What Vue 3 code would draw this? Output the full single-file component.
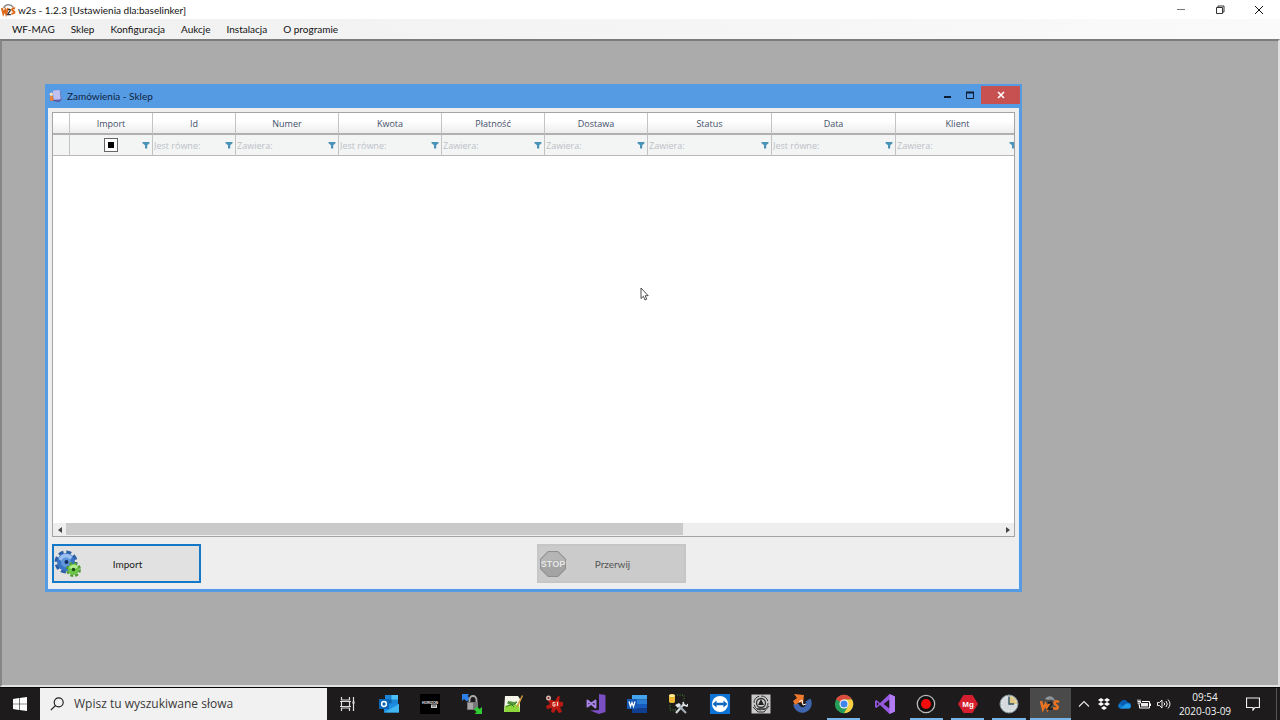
<script setup>
import { ref } from 'vue'

const menu = ['WF-MAG', 'Sklep', 'Konfiguracja', 'Aukcje', 'Instalacja', 'O programie']

const columns = [
  { name: 'Import', size: 'c-check', kind: 'check' },
  { name: 'Id', size: 'c-check', hint: 'Jest równe:' },
  { name: 'Numer', size: 'c-mid', hint: 'Zawiera:' },
  { name: 'Kwota', size: 'c-mid', hint: 'Jest równe:' },
  { name: 'Płatność', size: 'c-mid', hint: 'Zawiera:' },
  { name: 'Dostawa', size: 'c-mid', hint: 'Zawiera:' },
  { name: 'Status', size: 'c-wide', hint: 'Zawiera:' },
  { name: 'Data', size: 'c-wide', hint: 'Jest równe:' },
  { name: 'Klient', size: 'c-wide', hint: 'Zawiera:' }
]

const query = ref('')
</script>

<template>
  <div class="screen">
    <header class="titlebar">
      <svg class="app-icon" viewBox="0 0 16 14" aria-hidden="true">
        <path d="M3 5C4 1 10 0 13 4" fill="none" stroke="#8b8b8b" stroke-width="1.600" />
        <path d="M1 5l1.500 6 2-4 1 4 2-6" fill="none" stroke="#e06a1b" stroke-width="2.200" />
        <path d="M7.500 6.500c3-1 3 1 1 3l-1.500 2.500h3.500" fill="none" stroke="#333" stroke-width="1.400" />
        <path d="M15 5.500c-3-1-4 1.500-2 2.500s2 3-2 3" fill="none" stroke="#e06a1b" stroke-width="2.200" />
      </svg>
      <h1>w2s - 1.2.3 [Ustawienia dla:baselinker]</h1>
      <div class="win-controls">
        <button type="button" aria-label="Minimalizuj">
          <svg viewBox="0 0 10 10"><path d="M1 4.500h8" stroke="#777" /></svg>
        </button>
        <button type="button" aria-label="Przywróć">
          <svg viewBox="0 0 10 10" fill="none" stroke="#333"><path d="M1.500 2.500h6v6h-6zM3 2.500V1h6v6H7.500" /></svg>
        </button>
        <button type="button" aria-label="Zamknij">
          <svg viewBox="0 0 10 10"><path d="M1 1l8 8M9 1l-8 8" stroke="#111" /></svg>
        </button>
      </div>
    </header>

    <nav class="menubar">
      <button v-for="m in menu" :key="m" type="button">{{ m }}</button>
    </nav>

    <main class="workspace">
      <section class="child" aria-label="Zamówienia - Sklep">
        <header class="child-title">
          <svg class="child-icon" viewBox="0 0 14 14" aria-hidden="true">
            <path d="M4 1l8-.5 1.500 10L11 13l-7-1z" fill="#6f6cb8" />
            <path d="M4 1l7.500-.5 1 10-7.500.5z" fill="#bfc2f0" />
            <path d="M3 11.500l8 1.500 2.500-2.500" fill="none" stroke="#4d4690" />
            <circle cx="2.500" cy="5" r="1.800" fill="#ffe2b4" />
            <path d="M1 7h3l1 5H1z" fill="#e98236" />
          </svg>
          <h2>Zamówienia - Sklep</h2>
          <div class="child-controls">
            <button type="button" aria-label="Minimalizuj okno">
              <svg viewBox="0 0 10 10"><path d="M2 7h7" stroke="#0d1c30" stroke-width="2" /></svg>
            </button>
            <button type="button" aria-label="Maksymalizuj okno">
              <svg viewBox="0 0 10 10"><path d="M1.500 2v6.500h7V2" fill="none" stroke="#0d1c30" /><path d="M1 2.500h8" stroke="#0d1c30" stroke-width="2" /></svg>
            </button>
            <button type="button" class="child-close" aria-label="Zamknij okno">
              <svg viewBox="0 0 10 10"><path d="M2 2l6 6M8 2L2 8" stroke="#fff" stroke-width="1.600" /></svg>
            </button>
          </div>
        </header>

        <div class="child-body">
          <div class="grid">
            <div class="grid-view">
              <table>
                <colgroup>
                  <col class="c-mark" />
                  <col v-for="c in columns" :key="c.name" :class="c.size" />
                </colgroup>
                <thead>
                  <tr class="heads">
                    <th></th>
                    <th v-for="c in columns" :key="c.name" scope="col">{{ c.name }}</th>
                  </tr>
                  <tr class="filters">
                    <td></td>
                    <td v-for="c in columns" :key="c.name">
                      <div class="filter">
                        <input v-if="c.kind" type="checkbox" :aria-label="c.name" />
                        <input v-else type="text" :placeholder="c.hint" :aria-label="c.name" />
                        <button type="button" :aria-label="'Filtr ' + c.name">
                          <svg viewBox="0 0 8 8"><path d="M.5 1h7v1.200L5.200 4.200V7.500H3V4.200L.5 2.200z" fill="#4a93b8" /></svg>
                        </button>
                      </div>
                    </td>
                  </tr>
                </thead>
              </table>
            </div>
            <div class="scroll">
              <button type="button" aria-label="Przewiń w lewo">
                <svg viewBox="0 0 6 8"><path d="M5 1v6L1 4z" fill="#444" /></svg>
              </button>
              <div class="track"><div class="thumb"></div></div>
              <button type="button" aria-label="Przewiń w prawo">
                <svg viewBox="0 0 6 8"><path d="M1 1v6l4-3z" fill="#444" /></svg>
              </button>
            </div>
          </div>

          <div class="actions">
            <button type="button" class="action primary">
              <svg viewBox="0 0 28 28" aria-hidden="true">
                <circle cx="12" cy="12" r="9.500" fill="none" stroke="#2f5fa5" stroke-width="4" stroke-dasharray="4.800 2.660" />
                <circle cx="12" cy="12" r="9" fill="#3a74c4" />
                <path d="M4.500 9a8 8 0 0 1 14-2l-3.500 4a4 4 0 0 0-6 1z" fill="#9cc0f2" />
                <circle cx="12" cy="12.500" r="5" fill="#5f95dc" />
                <circle cx="12.500" cy="12" r="2" fill="#152e64" />
                <circle cx="19.500" cy="19.500" r="6" fill="none" stroke="#4f9a35" stroke-width="3" stroke-dasharray="2.900 1.810" />
                <circle cx="19.500" cy="19.500" r="5.500" fill="#6cc546" />
                <path d="M15 18a5 5 0 0 1 9-1l-3 2h-3z" fill="#b3ec8c" />
                <circle cx="19.500" cy="19.500" r="1.800" fill="#1e4d18" />
              </svg>
              <span>Import</span>
            </button>
            <button type="button" class="action" disabled>
              <svg viewBox="0 0 28 28" aria-hidden="true">
                <path d="M9 1h10l8 8v10l-8 8H9l-8-8V9z" fill="#8f8f8f" />
                <path d="M9.500 2h9L26 9.500v9L18.500 26h-9L2 18.500v-9z" fill="#a4a4a4" />
                <path d="M9.500 2h9L26 9.500v3C18 9 10 10 2 14V9.500z" fill="#b5b5b5" />
                <text x="14" y="17" text-anchor="middle" font-family="Liberation Sans, sans-serif" font-size="9" font-weight="700" fill="#e6e6e6">STOP</text>
              </svg>
              <span>Przerwij</span>
            </button>
          </div>
        </div>
      </section>

      <svg class="pointer" viewBox="0 0 9 14" aria-hidden="true">
        <path d="M1 1v10.500l2.400-2.200 1.600 3.700 1.700-.8L5.200 8.700h3z" fill="#fff" stroke="#222" stroke-width=".8" />
      </svg>
    </main>

    <footer class="taskbar">
      <button type="button" class="start" aria-label="Start">
        <svg viewBox="0 0 14 14"><path d="M0 2l6-.9v5.600H0zM6.600 1L14 0v6.700H6.600zM0 7.300h6v5.600L0 12zM6.600 7.300H14V14l-7.400-1z" fill="#fff" /></svg>
      </button>
      <label class="search">
        <svg viewBox="0 0 14 14"><circle cx="8.700" cy="5.300" r="4.500" fill="none" stroke="#222" stroke-width="1.200" /><path d="M5.500 8.500L.8 13.200" stroke="#222" stroke-width="1.200" /></svg>
        <input v-model="query" type="text" placeholder="Wpisz tu wyszukiwane słowa" aria-label="Wyszukaj" />
      </label>

      <div class="tasks">
        <button type="button" aria-label="Widok zadań">
          <svg viewBox="0 0 20 20" fill="none" stroke="#ddd" stroke-width="1.200"><path d="M3.500 3v3h8V3M3.500 17v-3h8v3M3.500 7.500h8v5h-8zM2 7.500h11M2 12.500h11M15.500 3v14" /><path d="M14.500 8.500h2" stroke-width="2.500" /></svg>
        </button>
        <button type="button" aria-label="Outlook">
          <svg viewBox="0 0 20 20">
            <path d="M6 1h13v9H6z" fill="#1b86d8" /><path d="M12.500 1H19v4.500h-6.500z" fill="#4cc1f5" /><path d="M6 5.500h6.500V10H6z" fill="#0f5ea8" />
            <path d="M5 9l15 1v8.500H5z" fill="#1a8de0" /><path d="M5 18.500L20 10v8.500z" fill="#41b5f2" /><path d="M0 5h10v10H0z" fill="#0a66b8" />
            <circle cx="5" cy="10" r="2.400" fill="none" stroke="#fff" stroke-width="1.500" />
          </svg>
        </button>
        <button type="button" aria-label="Horizon">
          <svg viewBox="0 0 20 20">
            <path d="M0 0h20v20H0z" fill="#000" />
            <text x="2" y="9.500" font-family="Liberation Sans, sans-serif" font-size="3.500" font-weight="700" fill="#eee">HORIZON</text>
            <path d="M11 10.500h6v3.500h-6z" fill="#c9c9c9" /><path d="M12 12h4" stroke="#555" />
          </svg>
        </button>
        <button type="button" aria-label="WinSCP">
          <svg viewBox="0 0 20 20">
            <path d="M0 0h7L5.500 2 8 4.500 5 7.500 2 5 0 7z" fill="#2e7fe8" />
            <path d="M7.500 9V6a3.500 4 0 0 1 7 0v3" fill="none" stroke="#aaa" stroke-width="1.800" />
            <path d="M5 8h11v8H5z" fill="#777" /><path d="M6 9h5v6H6z" fill="#a8a8a8" />
            <path d="M20 20h-7.500l2-2-2.500-2.500 3-3 2.500 2.500 2.500-2z" fill="#31c934" />
          </svg>
        </button>
        <button type="button" aria-label="Notepad++">
          <svg viewBox="0 0 20 20">
            <path d="M2 2h13l2 3v13H1z" fill="#f3f6e8" /><path d="M2 12c4-2 9-2 14-1l1 7H1z" fill="#8ed63c" />
            <path d="M4 9c3-4 6 1 10-2-1 5-5 5-9 3" fill="#5a9a45" /><path d="M3 13c4-3 8-1 11-5M5 7l6 6" stroke="#3b7f29" fill="none" />
            <path d="M19 1l-5 10-1 3 2.500-2L20 2z" fill="#d79d41" />
          </svg>
        </button>
        <button type="button" aria-label="IrfanView">
          <svg viewBox="0 0 20 20">
            <path d="M3 5l5 1 3 1 3-5 2 .5-1 5 4 .5v4l-3 1 2 5-3 1-3-4-2 4-3-1 1-4-5 1-1-3 4-2z" fill="#b91912" />
            <circle cx="4.500" cy="4" r="2.500" fill="#d8bcb8" /><circle cx="4.500" cy="4" r="1" fill="#801812" />
            <path d="M8 8l7-1v5l-6 1z" fill="#d93429" /><path d="M11 8.500H9V12h2v-2M13.500 8v4" stroke="#eed2c4" fill="none" />
          </svg>
        </button>
        <button type="button" aria-label="Visual Studio">
          <svg viewBox="0 0 20 20">
            <path d="M13 0l6.500 1v17L13 20l-9-3.500 9-.5z" fill="#7b4fc4" />
            <path d="M1.500 6.500v6l8-6v7z" fill="none" stroke="#a883e6" stroke-width="1.900" stroke-linejoin="round" />
          </svg>
        </button>
        <button type="button" aria-label="Word">
          <svg viewBox="0 0 20 20">
            <path d="M5 1h15v4.500H5z" fill="#42a5ee" /><path d="M5 5.500h15V10H5z" fill="#2b7cd3" /><path d="M5 10h15v4.500H5z" fill="#185abd" /><path d="M5 14.500h15V19H5z" fill="#103f91" />
            <path d="M0 5h10v10H0z" fill="#1658b5" /><path d="M2 7.500l1.500 5L5 8.500l1.500 4 1.500-5" fill="none" stroke="#fff" stroke-width="1.300" />
          </svg>
        </button>
        <button type="button" aria-label="SQL Server Management Studio">
          <svg viewBox="0 0 20 20">
            <path d="M1 1.500c0-2 6-2 6 0v6c0 2-6 2-6 0z" fill="#eeb934" /><ellipse cx="4" cy="1.800" rx="3" ry="1.300" fill="#fff0a2" />
            <path d="M9 1h7v6M2 11v5h6" fill="none" stroke="#458f37" stroke-dasharray="1 1.500" />
            <path d="M8 19l8-9" stroke="#d3d7db" stroke-width="2.200" /><path d="M10 11l8 8" stroke="#a7afb9" stroke-width="2.200" />
            <path d="M7 11l4-2 2 2-3 3z" fill="#dfe5ea" /><path d="M15 8l1 3 3 1 1-2" fill="none" stroke="#dfe5ea" stroke-width="1.600" />
          </svg>
        </button>
        <button type="button" aria-label="TeamViewer">
          <svg viewBox="0 0 20 20"><path d="M0 0h20v20H0z" fill="#0e74d4" /><circle cx="10" cy="10" r="8" fill="#fff" /><path d="M2.500 10l4-3.500v2.300h7V6.500l4 3.500-4 3.500v-2.300h-7v2.300z" fill="#0e68bd" /></svg>
        </button>
        <button type="button" aria-label="Narzędzie">
          <svg viewBox="0 0 20 20">
            <path d="M.5.500h19v19H.5z" fill="#c9c9c9" /><g fill="none" stroke="#333"><circle cx="10" cy="9" r="7" stroke-dasharray="9 2" /><circle cx="10" cy="9" r="4.500" stroke-width="1.300" /><path d="M2 13l5 5M18 12l-5 6M7 18h6" /></g>
            <path d="M10 5l3 6H7z" fill="#222" /><path d="M6 15h8" stroke="#333" stroke-width="1.500" />
          </svg>
        </button>
        <button type="button" aria-label="Baselinker">
          <svg viewBox="0 0 20 20">
            <path d="M16 6a6.500 6.500 0 1 1-12 4" fill="none" stroke="#3e65ad" stroke-width="5.500" />
            <path d="M2 0l10 1-1 9-3-2-5 3-2-4 4-3z" fill="#ee782b" /><path d="M7 8l3-2 1 5 3-1" fill="none" stroke="#fff" />
          </svg>
        </button>
        <button type="button" class="running" aria-label="Chrome">
          <svg viewBox="0 0 20 20">
            <circle cx="10" cy="10" r="9.200" fill="#269d58" /><path d="M10 10L2 5.400A9.200 9.200 0 0 1 18 5.400H10z" fill="#dd4b3e" />
            <path d="M10 5.400h8A9.200 9.200 0 0 1 10 19.200l4-6.900z" fill="#f8cf45" />
            <circle cx="10" cy="10" r="4.500" fill="#fff" /><circle cx="10" cy="10" r="3.500" fill="#4285e9" />
          </svg>
        </button>
        <button type="button" aria-label="Visual Studio 2019">
          <svg viewBox="0 0 20 20">
            <path d="M14.500 0L20 2.500v15L14.500 20 5 11l-3.500 3L0 13V7l1.500-1L5 9zM14.500 5.500L8.500 10l6 4.500zM1.800 8v4L4 10z" fill="#9559df" fill-rule="evenodd" />
            <path d="M14.500 0L20 2.500v15L14.500 20z" fill="#b17bf2" />
          </svg>
        </button>
        <button type="button" class="running" aria-label="Nagrywanie">
          <svg viewBox="0 0 20 20"><circle cx="10" cy="10" r="8.700" fill="#111" stroke="#bbb" stroke-width="1.300" /><circle cx="10" cy="10" r="5" fill="#f20c0c" /></svg>
        </button>
        <button type="button" class="running" aria-label="Mg">
          <svg viewBox="0 0 20 20"><path d="M5.500 1h9L20 10l-5.500 9h-9L0 10z" fill="#d61f2e" /><text x="10" y="13" text-anchor="middle" font-family="Liberation Sans, sans-serif" font-size="8" font-weight="700" fill="#fff">Mg</text></svg>
        </button>
        <button type="button" class="running" aria-label="Zegar">
          <svg viewBox="0 0 20 20"><circle cx="10" cy="10" r="9" fill="#d3d9dc" stroke="#85949c" /><path d="M10 10V2a8 8 0 0 1 8 8z" fill="#ddc783" /><circle cx="10" cy="10" r="7" fill="none" stroke="#fff" stroke-dasharray="1 2.660" /><path d="M10 2.500V10h5" fill="none" stroke="#315264" stroke-width="1.400" /></svg>
        </button>
        <button type="button" class="running current" aria-label="w2s">
          <svg viewBox="0 0 20 20">
            <path d="M5 5c3-4 8-4 11 3-3-3-6-3-8-2z" fill="#8f9699" />
            <path d="M1 7l2 8 2.500-5 2 5 1.500-5M19 8c-4-2-6 1-3 3s2 5-3 3" fill="none" stroke="#e87422" stroke-width="2.500" />
            <path d="M8 9c4-2 5 1 2 3l-2 3h5" fill="none" stroke="#1b1b1b" stroke-width="1.500" />
          </svg>
        </button>
      </div>

      <div class="tray">
        <button type="button" aria-label="Pokaż ukryte ikony"><svg viewBox="0 0 14 14"><path d="M2 9.500l5-5 5 5" fill="none" stroke="#e4e4e4" stroke-width="1.200" /></svg></button>
        <button type="button" aria-label="Dropbox"><svg viewBox="0 0 14 14"><path d="M4 1l3 2-3 2-3-2zM10 1l3 2-3 2-3-2zM4 5l3 2-3 2-3-2zM10 5l3 2-3 2-3-2zM7 9l3 2-3 2-3-2z" fill="#fff" /></svg></button>
        <button type="button" aria-label="OneDrive"><svg viewBox="0 0 14 14"><path d="M3 11.500a3 3 0 0 1 0-5.500A4 4 0 0 1 10.500 5.500a3 3 0 0 1 1 6z" fill="#0d78d0" /><path d="M3 6a4 4 0 0 1 7.500-.5L5 9z" fill="#0a5dae" /><path d="M3 11.500l6-4.500c3-1 5 1 4.500 3 0 1-1 1.500-2 1.500z" fill="#239beb" /></svg></button>
        <button type="button" aria-label="Bateria"><svg viewBox="0 0 14 14"><path d="M4 6h7v3.500H4z" fill="#e9e9e9" /><path d="M5 4.500h7.500V11h-10V8M13.500 6.500v2.500M1 2.500v1.500M3 2.500v1.500M.5 4.500h3v1.500h-3M2 6v2.500" fill="none" stroke="#fff" /></svg></button>
        <button type="button" aria-label="Głośność"><svg viewBox="0 0 14 14" fill="none" stroke="#eee"><path d="M.5 5.500h2L5 3v8L2.500 8.500h-2zM7 5.500q1.300 1.500 0 3M9 4q2.600 3 0 6M11 2.500q4 4.500 0 9" /></svg></button>
        <div class="clock"><time>09:54</time><time>2020-03-09</time></div>
        <button type="button" class="notes" aria-label="Centrum akcji"><svg viewBox="0 0 14 14"><path d="M.5 1h13v9.500H9L7 13v-2.500H.5z" fill="none" stroke="#eee" stroke-width="1.200" /></svg></button>
      </div>
    </footer>
  </div>
</template>

<style>
body { margin: 0; }
</style>

<style scoped>
* { box-sizing: border-box; }
.screen {
  min-height: 100vh;
  display: flex;
  flex-direction: column;
  background: #f0f0f0;
  color: #111;
  font-family: "Open Sans", "Noto Sans", sans-serif;
  font-size: 10px;
  line-height: 14px;
}
button, input { font: inherit; color: inherit; border: 0; padding: 0; margin: 0; background: none; }
svg { display: block; flex: none; }
h1, h2 { margin: 0; font-size: 10px; font-weight: 400; }
.titlebar, .menubar, .child-title, .actions { font-family: Lato, "Open Sans", sans-serif; }

.titlebar { height: 19px; display: flex; align-items: center; gap: 2px; background: #fff; padding-left: 1px; }
.app-icon { width: 15px; height: 14px; }
.win-controls { margin-left: auto; display: flex; padding-right: 2px; }
.win-controls button { width: 39px; height: 19px; display: grid; place-items: center; }
.win-controls svg { width: 10px; height: 10px; }

.menubar { height: 20px; display: flex; align-items: center; background: linear-gradient(90deg, #f0f0f0, #fafafa); padding-left: 4px; }
.menubar button { padding: 0 8px; }

.workspace {
  position: relative;
  flex: 1;
  min-height: 400px;
  background: #ababab;
  border: 2px solid #e0e0e0;
  border-top-color: #7b7b7b;
  border-left-color: #868686;
}
.child {
  position: absolute;
  inset: 43px 256px 93px 43px;
  display: flex;
  flex-direction: column;
  background: #559be4;
  padding: 0 3px 3px;
}
.child-title { height: 24px; display: flex; align-items: center; gap: 5px; padding-left: 1px; color: #10233c; }
.child-icon { width: 13px; height: 14px; }
.child-controls { margin-left: auto; align-self: flex-start; display: flex; margin-right: -1px; padding-top: 2px; }
.child-controls button { width: 23px; height: 18px; display: grid; place-items: center; }
.child-controls svg { width: 10px; height: 10px; }
.child-controls .child-close { width: 39px; background: #c75050; }

.child-body { flex: 1; min-height: 0; display: flex; flex-direction: column; gap: 7px; padding: 4px 3px 5px 4px; background: #eee; border: 1px solid #e4eefa; border-width: 0 1px 1px 0; }
.grid { flex: 1; min-height: 0; display: flex; flex-direction: column; border: 1px solid #a4a4a4; background: #fff; }
.grid-view { flex: 1; overflow: hidden; }
table { border-collapse: separate; border-spacing: 0; table-layout: fixed; width: 967px; }
.c-mark { width: 17px; }
.c-check { width: 83px; }
.c-mid { width: 103px; }
.c-wide { width: 124px; }
th, td { padding: 0; border-right: 1px solid #c3c3c3; border-bottom: 1px solid #b9b9b9; }
th { height: 22px; padding-top: 2px; font-weight: 400; font-size: 9px; color: #44506a; background: linear-gradient(#fff 40%, #ededed); border-bottom: 2px solid #b0b0b0; }
td { height: 21px; background: #f3f4f4; }
.filter { display: flex; align-items: center; height: 20px; padding: 0 2px 0 1px; }
.filter input[type="text"] { flex: 1; min-width: 0; width: 0; height: 16px; padding-top: 1px; font-size: 9px; outline: 0; }
.filter input::placeholder { color: #bcc1c7; opacity: 1; }
.filter input[type="checkbox"] { appearance: none; width: 14px; height: 14px; border: 1px solid #666; background: linear-gradient(#000, #000) center / 6px 6px no-repeat #fff; margin: 0 auto; }
.filter input[type="checkbox"] + button { margin-left: -8px; }
.filter svg { width: 8px; height: 8px; }

.scroll { display: flex; height: 13px; background: #eee; }
.scroll button { width: 13px; display: grid; place-items: center; }
.scroll svg { width: 6px; height: 8px; }
.track { flex: 1; }
.thumb { width: 66%; height: 12px; background: #cacaca; }

.actions { display: grid; grid-template-columns: 1fr 1fr; gap: 7px; }
.action { width: 149px; height: 39px; display: flex; align-items: center; background: #e1e1e1; border: 2px solid #1478c8; color: #222; }
.action svg { width: 28px; height: 28px; }
.action span { flex: 1; text-align: center; padding-right: 26px; }
.action:disabled { background: #cbcbcb; border-color: #c6c6c6; color: #555; }
.pointer { position: absolute; top: 246px; left: 638px; width: 9px; height: 14px; }

.taskbar { height: 33px; display: flex; align-items: stretch; background: #1d1b1b; border-top: 1px solid #080808; color: #f4f4f4; }
.start { width: 40px; display: grid; place-items: center; }
.start svg { width: 14px; height: 14px; }
.search { width: 287px; display: flex; align-items: center; gap: 10px; padding-left: 10px; background: #f1f1f1; color: #333; }
.search svg { width: 14px; height: 14px; }
.search input { flex: 1; min-width: 0; font-size: 12px; outline: 0; }
.search input::placeholder { color: #3a3a3a; opacity: 1; }
.tasks { flex: 0 1 744px; display: grid; grid-template-columns: repeat(18, 1fr); }
.tasks button { display: grid; place-items: center; position: relative; }
.tasks svg { width: 20px; height: 20px; }
.tasks .running::after { content: ""; position: absolute; left: 4px; right: 4px; bottom: 0; height: 2px; background: #78b5e8; }
.tasks .current { background: #4a4a4a; }
.tasks .current::after { left: 0; right: 0; }
.tray { margin-left: auto; display: flex; align-items: center; border-right: 1px solid #555; margin-right: 3px; }
.tray button { width: 20px; height: 20px; display: grid; place-items: center; }
.tray svg { width: 14px; height: 14px; }
.clock { width: 62px; display: grid; justify-items: center; font-size: 10px; }
.tray .notes { width: 40px; padding-right: 6px; }
</style>
